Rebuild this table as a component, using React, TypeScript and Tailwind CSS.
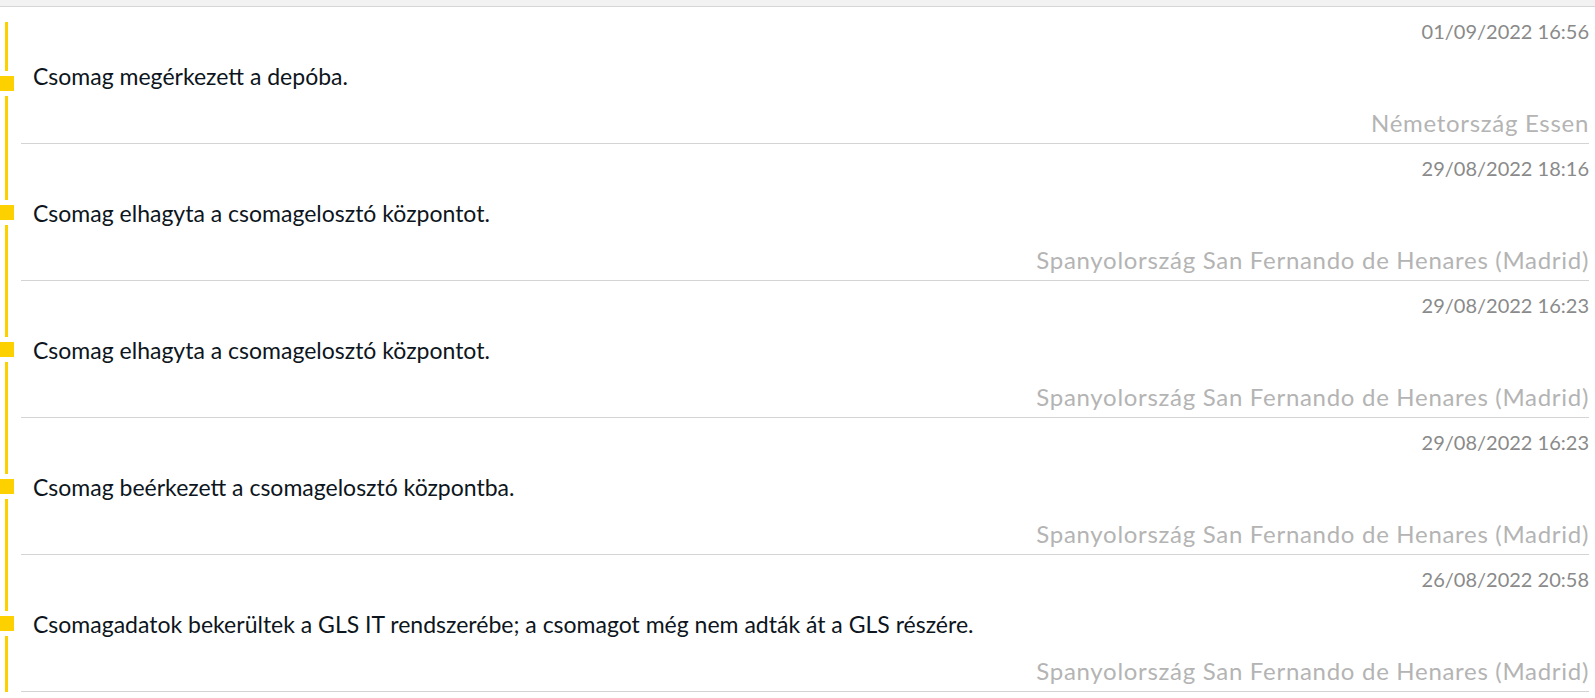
import React from "react";

type Event = {
  date: string;
  text: string;
  place: string;
};

const events: Event[] = [
  { date: "01/09/2022 16:56", text: "Csomag megérkezett a depóba.", place: "Németország Essen" },
  { date: "29/08/2022 18:16", text: "Csomag elhagyta a csomagelosztó központot.", place: "Spanyolország San Fernando de Henares (Madrid)" },
  { date: "29/08/2022 16:23", text: "Csomag elhagyta a csomagelosztó központot.", place: "Spanyolország San Fernando de Henares (Madrid)" },
  { date: "29/08/2022 16:23", text: "Csomag beérkezett a csomagelosztó központba.", place: "Spanyolország San Fernando de Henares (Madrid)" },
  {
    date: "26/08/2022 20:58",
    text: "Csomagadatok bekerültek a GLS IT rendszerébe; a csomagot még nem adták át a GLS részére.",
    place: "Spanyolország San Fernando de Henares (Madrid)",
  },
];

function App() {
  return (
    <div className="w-[1595px] h-[698px] overflow-hidden bg-white font-['Lato','Open_Sans',sans-serif]">
      {/* top bar of the scroll area */}
      <div className="h-[7px] bg-[#f2f2f2] border-b border-[#d6d6d6]" />

      <ul>
        {events.map((ev, i) => (
          <li key={i} className="flex">
            {/* timeline */}
            <div className="w-[21px] shrink-0 flex flex-col">
              <div className={"flex-1 ml-[5px] w-[3px] bg-[#fdd000] mb-[5px] " + (i === 0 ? "mt-[15px]" : "")} />
              <div className="w-[14px] h-[15px] bg-[#fdd000]" />
              <div className="flex-1 ml-[5px] w-[3px] bg-[#fdd000] mt-[5px]" />
            </div>

            {/* content */}
            <div className="flex-1 mr-[6px] pt-[12px] pb-[6px] border-b border-[#d4d4d4]">
              <div className="text-right text-[20px] leading-[24px] text-[#8a8a8a]">{ev.date}</div>
              <div className="mt-[19px] pl-[12px] text-[23px] leading-[28px] text-[#0d1520]">{ev.text}</div>
              <div className="mt-[19px] text-right text-[24px] leading-[28px] tracking-[0.7px] text-[#b4b4b4]">{ev.place}</div>
            </div>
          </li>
        ))}
      </ul>
    </div>
  );
}

export default App;
